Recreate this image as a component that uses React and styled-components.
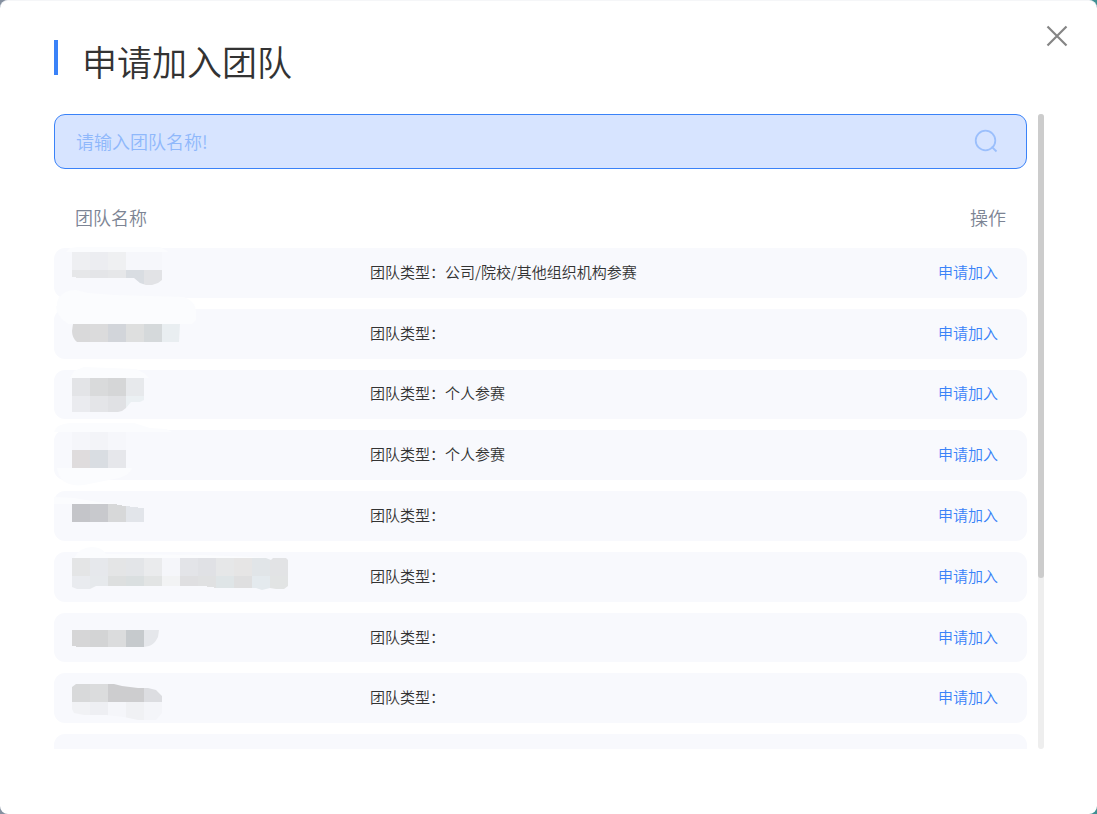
import React, { useId, useState } from 'react';
import styled, { createGlobalStyle } from 'styled-components';

const colorCSS = {
  blue: '#3a82f8',
  blueSoft: '#8fb8fb',
  blueBg: '#d7e4ff',
  rowBg: '#f8f9fd',
  text: '#333333',
  textGray: '#7c8494',
  white: '#ffffff',
};

// 每个马赛克块 18px，从 x=18 开始；lines: [y, 高度, 颜色...]
const teams = [
  {
    id: 1,
    type: '公司/院校/其他组织机构参赛',
    halo: 'M12 4L16 0L24 -1H106L115 4Z',
    clip: 'M18 4H108V32L104 35L98 37H92L86 35L80 30H22V29H18Z',
    lines: [
      [4, 18, ['#eeeff2', '#ecedf1', '#eff0f2', '#f6f7fb', '#f6f7fb']],
      [22, 15, ['#e6e7e9', '#e4e5e8', '#e6e7e9', '#d9dde2', '#e2e3e6']],
    ],
  },
  {
    id: 2,
    type: '',
    halo: 'M3 -3C2 -12 10 -19 22 -19L34 -16L60 -14L130 -12Q141 -8 142 2V11L138 15H14Q2 7 2 -3Z',
    clip: 'M19 15H126L125 33H23Q18 29 18 22Z',
    lines: [[15, 18, ['#d9d9da', '#dbdbdc', '#d2d5da', '#dedfdf', '#d5d9db', '#e9eef1']]],
  },
  {
    id: 3,
    type: '个人参赛',
    halo: 'M16 8L20 1L30 -3L82 -1L90 3L95 8Z',
    clip: 'M18 8H90V30L86 32H77L72 38L68 41L64 42H18Z',
    lines: [
      [8, 18, ['#e3e4e7', '#d9dadb', '#d5d6d7', '#e7e9ec']],
      [26, 16, ['#eaebef', '#e4e5e8', '#e0e1e4', '#ebf0f3']],
    ],
  },
  {
    id: 4,
    type: '个人参赛',
    halo: 'M0 2Q2 -6 16 -7H80L96 -2L112 -1L118 2ZM3 38H78Q76 46 60 49L30 55Q6 58 3 38Z',
    clip: 'M18 2H72V38H18Z',
    lines: [
      [2, 18, ['#f5f6fa', '#f3f4f8', '#f6f7fb']],
      [20, 18, ['#dfdcdd', '#d9dde2', '#e6e7eb']],
    ],
  },
  {
    id: 5,
    type: '',
    halo: 'M0 13V6L20 7L44 11L62 13Z',
    clip: 'M18 13H63V14H68V15H76V16H84V17H90V31H18Z',
    lines: [[13, 18, ['#c4c5c9', '#c8c9cd', '#d7d8d9', '#e2e5ea']]],
  },
  {
    id: 6,
    type: '',
    halo: 'M20 6Q26 -5 38 -5Q48 -5 52 2L150 3L216 6Z',
    clip: 'M18 6H212L217 8L219 6H232L234 8V34L230 37H222L216 36L208 38L202 36H160V35L153 35V34H131V34H42L36 37H23L18 35Z',
    lines: [
      [6, 18, ['#e4e5e6', '#e6e8ec', '#e4e5e6', '#e3e5e8', '#eaebed', '#f5f6fa', '#e3e4e8', '#e0e1e5', '#e6e7e8', '#e6e5e5', '#e1e5e8', '#e2e3e5']],
      [24, 14, ['#e9ebef', '#e6e9ec', '#dddfdf', '#dadfe0', '#e2e4e4', '#f2f3f4', '#dfdfe1', '#e0e1e2', '#dfe5e7', '#dfdfe0', '#e4eaee', '#e2e4e4']],
    ],
  },
  {
    id: 7,
    type: '',
    halo: '',
    clip: 'M18 17H105L104 24Q100 32 95 33L90 34H22V33H18Z',
    lines: [[17, 17, ['#d6d6d7', '#d3d4d5', '#dbdcdd', '#c6cacd', '#e5e7eb']]],
  },
  {
    id: 8,
    type: '',
    halo: '',
    clip: 'M22 11H60L68 13L84 15H94L102 17L108 23V40L102 47H84L70 44L52 42H30L20 40L18 36V14Z',
    lines: [
      [11, 18, ['#d8d9da', '#dbdcdd', '#cdcdcf', '#cdcdcf', '#dcdde1']],
      [29, 18, ['#f1f2f5', '#eeeff3', '#f5f6fa', '#f0f1f4', '#f4f5f9']],
    ],
  },
];

// 打码后的团队名称
const MaskedName = ({ halo, clip, lines }) => {
  const clipId = useId();

  return (
    <Mosaic viewBox="0 0 300 50" aria-hidden="true">
      <clipPath id={clipId}>
        <path d={clip} />
      </clipPath>
      {halo && <path d={halo} fill="#fbfcfe" />}
      <g clipPath={`url(#${clipId})`} shapeRendering="crispEdges">
        {lines.map(([y, height, colors]) =>
          colors.map((color, i) => (
            <rect key={`${y}-${i}`} x={18 + i * 18} y={y} width={18} height={height} fill={color} />
          ))
        )}
      </g>
    </Mosaic>
  );
};

// 申请加入团队弹窗
const App = () => {
  const [keyword, setKeyword] = useState('');

  return (
    <>
      <GlobalStyle />
      <Modal role="dialog" aria-labelledby="modal-title">
        <CloseBtn type="button" aria-label="关闭">
          <svg width="22" height="22" viewBox="0 0 22 22" fill="none" stroke="#858585" strokeWidth="2.2">
            <path d="M1.5 1.5L20.5 20.5M20.5 1.5L1.5 20.5" />
          </svg>
        </CloseBtn>

        <Header>
          <TitleBar />
          <Title id="modal-title">申请加入团队</Title>
        </Header>

        <Body>
          <ScrollArea>
            <SearchBox>
              <SearchInput
                aria-label="团队名称"
                placeholder="请输入团队名称!"
                value={keyword}
                onChange={(e) => setKeyword(e.target.value)}
              />
              <SearchBtn type="button" aria-label="搜索">
                <svg width="24" height="24" viewBox="0 0 24 24" fill="none" stroke="#9bbffc" strokeWidth="1.8">
                  <circle cx="11.5" cy="11.5" r="9.8" />
                  <path d="M17.6 17.6L22.5 22.5" />
                </svg>
              </SearchBtn>
            </SearchBox>

            <ListHead>
              <span>团队名称</span>
              <span>操作</span>
            </ListHead>

            <List>
              {teams.map((team) => (
                <Row key={team.id}>
                  <NameCell>
                    <MaskedName halo={team.halo} clip={team.clip} lines={team.lines} />
                  </NameCell>
                  <span>团队类型：{team.type}</span>
                  <JoinBtn type="button">申请加入</JoinBtn>
                </Row>
              ))}
              <Row aria-hidden="true" />
            </List>
          </ScrollArea>

          <ScrollTrack>
            <ScrollThumb />
          </ScrollTrack>
        </Body>
      </Modal>
    </>
  );
};

const GlobalStyle = createGlobalStyle`
  * {
    box-sizing: border-box;
  }

  body {
    margin: 0;
    background: linear-gradient(90deg, #8590a0, #3f8f93);
    font-family: "Noto Sans CJK SC", sans-serif;
    font-weight: 350;
    color: ${colorCSS.text};
  }

  button, input {
    font: inherit;
  }
`

const Modal = styled.main`
  position: relative;
  height: 100vh;
  padding: 39px 53px 65px 54px;
  display: flex;
  flex-direction: column;
  border-top: 1px solid #f5f6f8;
  border-radius: 8px;
  background: ${colorCSS.white};
`

const CloseBtn = styled.button`
  position: absolute;
  top: 20px;
  right: 25px;
  width: 30px;
  height: 30px;
  padding: 0;
  display: flex;
  align-items: center;
  justify-content: center;
  border: none;
  background: none;
  cursor: pointer;
`

const Header = styled.header`
  height: 74px;
  flex-shrink: 0;
  display: flex;
  gap: 24px;
`

const TitleBar = styled.span`
  width: 4px;
  height: 35px;
  background: ${colorCSS.blue};
`

const Title = styled.h1`
  margin: 0;
  font-size: 35px;
  line-height: 42px;
  font-weight: 350;
`

const Body = styled.div`
  flex: 1;
  min-height: 0;
  display: flex;
  gap: 11px;
`

const ScrollArea = styled.section`
  flex: 1;
  min-width: 0;
  overflow: hidden;
`

const ScrollTrack = styled.div`
  width: 6px;
  border-radius: 3px;
  background: #eeeeee;
`

const ScrollThumb = styled.div`
  height: 73%;
  border-radius: 3px;
  background: #cccccc;
`

const SearchBox = styled.div`
  height: 55px;
  padding: 0 28px 2px 21px;
  display: flex;
  align-items: center;
  border: 1px solid ${colorCSS.blue};
  border-radius: 11px;
  background: ${colorCSS.blueBg};
`

const SearchInput = styled.input`
  flex: 1;
  min-width: 0;
  padding: 0;
  border: none;
  outline: none;
  background: none;
  color: ${colorCSS.text};
  font-size: 18px;

  &::placeholder {
    color: ${colorCSS.blueSoft};
    opacity: 1;
  }
`

const SearchBtn = styled.button`
  height: 24px;
  padding: 0;
  border: none;
  background: none;
  cursor: pointer;
`

const ListHead = styled.div`
  height: 79px;
  padding: 18px 21px 0;
  display: flex;
  justify-content: space-between;
  color: ${colorCSS.textGray};
  font-size: 18px;
  line-height: 60px;
`

const List = styled.ul`
  min-height: 536px;
  margin: 0;
  padding: 0;
  display: grid;
  grid-auto-rows: 1fr;
  gap: 11px;
  list-style: none;
`

const Row = styled.li`
  padding: 0 29px 2px 0;
  display: grid;
  grid-template-columns: 316px 1fr auto;
  align-items: center;
  border-radius: 11px;
  background: ${colorCSS.rowBg};
  font-size: 15px;
  line-height: 24px;
`

const NameCell = styled.div`
  align-self: start;
  height: 24px;
`

const Mosaic = styled.svg`
  position: relative;
  width: 300px;
  height: 50px;
  display: block;
  overflow: visible;
`

const JoinBtn = styled.button`
  padding: 0;
  border: none;
  background: none;
  color: ${colorCSS.blue};
  cursor: pointer;
`

export default App;
